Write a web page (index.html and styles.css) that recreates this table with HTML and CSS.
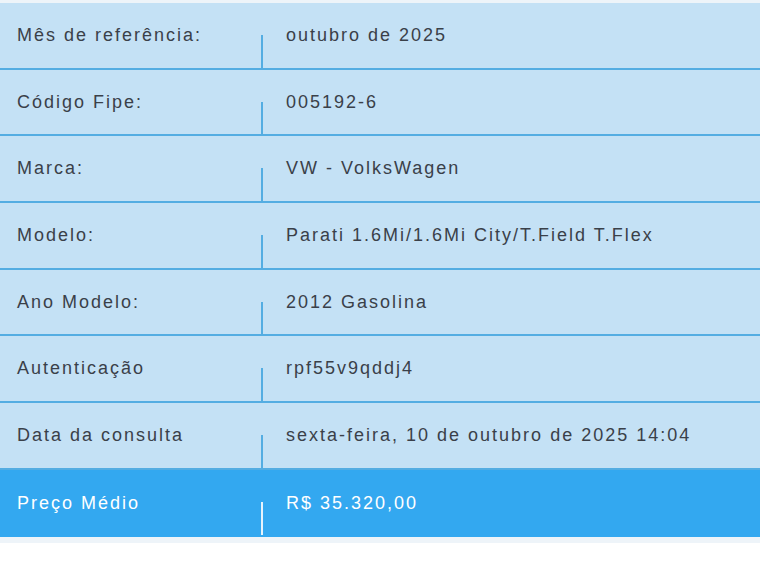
FILE: index.html
```html
<!DOCTYPE html>
<html lang="pt-BR">
<head>
<meta charset="utf-8">
<title>Tabela Fipe</title>
<link rel="stylesheet" href="styles.css">
</head>
<body>
<div class="fipe">
  <div class="row"><div class="label">Mês de referência:</div><div class="value">outubro de 2025</div></div>
  <div class="row"><div class="label">Código Fipe:</div><div class="value">005192-6</div></div>
  <div class="row"><div class="label">Marca:</div><div class="value">VW - VolksWagen</div></div>
  <div class="row"><div class="label">Modelo:</div><div class="value">Parati 1.6Mi/1.6Mi City/T.Field T.Flex</div></div>
  <div class="row"><div class="label">Ano Modelo:</div><div class="value">2012 Gasolina</div></div>
  <div class="row"><div class="label">Autenticação</div><div class="value">rpf55v9qddj4</div></div>
  <div class="row"><div class="label">Data da consulta</div><div class="value">sexta-feira, 10 de outubro de 2025 14:04</div></div>
  <div class="row row-price"><div class="label">Preço Médio</div><div class="value">R$ 35.320,00</div></div>
</div>
</body>
</html>
```

FILE: styles.css
```css
html, body {
  margin: 0;
  padding: 0;
  background: #ffffff;
}

.fipe {
  background: #eef4f9;
  padding: 3px 0 6px;
  font-family: "Liberation Sans", Arial, sans-serif;
  font-size: 18px;
  letter-spacing: 2px;
  color: #3a4049;
}

.row {
  display: grid;
  grid-template-columns: 263px 1fr;
  height: 66.7px;
  box-sizing: border-box;
  background: #c4e1f5;
  border-bottom: 2px solid #54ade2;
}

.row-price {
  background: #33a8f0;
  color: #ffffff;
  border-bottom: none;
}

.label {
  position: relative;
  display: flex;
  align-items: center;
  padding-left: 17px;
}

.label::after {
  content: "";
  position: absolute;
  right: 0;
  top: 32px;
  bottom: 0;
  width: 2px;
  background: #54ade2;
}

.row-price .label::after {
  background: #e6f3fc;
  bottom: 2px;
}

.value {
  display: flex;
  align-items: center;
  padding-left: 23px;
}
```
